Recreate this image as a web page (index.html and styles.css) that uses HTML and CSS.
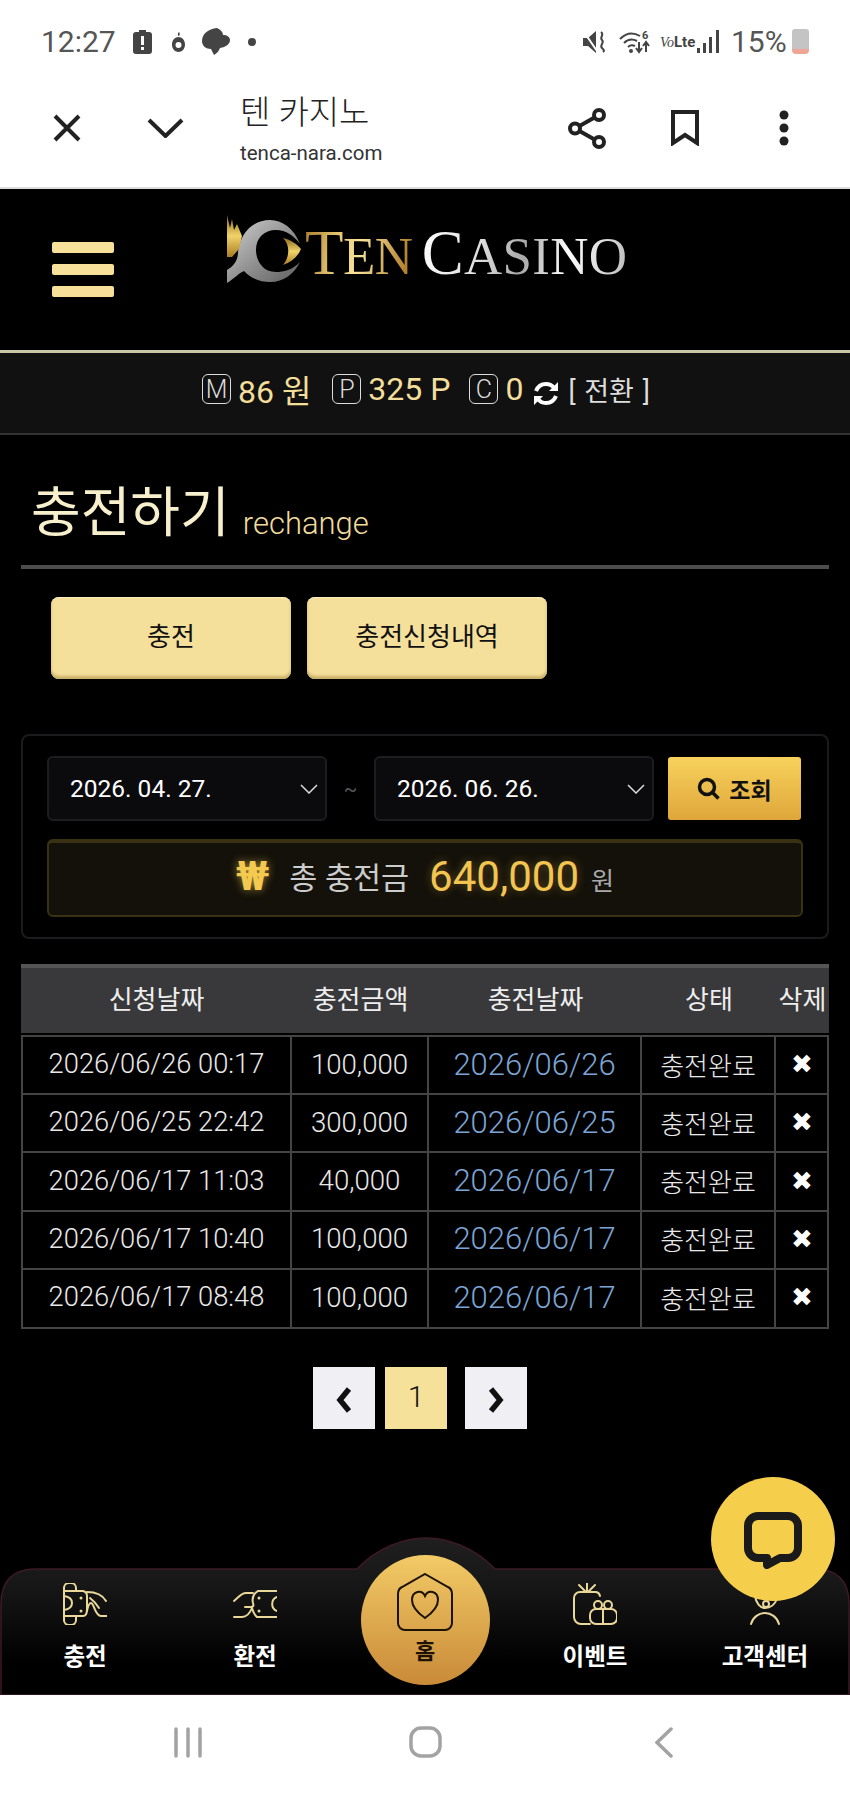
FILE: index.html
```html
<!DOCTYPE html>
<html lang="ko">
<head>
    <meta charset="UTF-8">
    <meta name="viewport" content="width=device-width, initial-scale=1.0">
    <title>텐 카지노</title>
    <link rel="stylesheet" href="styles.css">
</head>
<body>
    <div class="status-bar">
        <span class="clock">12:27</span>
        <svg class="st-alert" width="19" height="24" viewBox="0 0 19 24"><path d="M6 0h7v2h3a3 3 0 0 1 3 3v16a3 3 0 0 1-3 3H3a3 3 0 0 1-3-3V5a3 3 0 0 1 3-3h3z" fill="#444"/><rect x="8" y="6" width="3" height="9" fill="#fff"/><rect x="8" y="17" width="3" height="3" fill="#fff"/></svg>
        <svg class="st-fruit" width="13" height="20" viewBox="0 0 13 20"><path d="M7 0c1 1 1 3 0 4-1 0-2-2 0-4z" fill="#444"/><path d="M6.500 5C3 5 0 8 0 12.500S3 20 6.500 20 13 17 13 12.500 10 5 6.500 5zm0 5a3 3 0 1 1 0 6 3 3 0 0 1 0-6z" fill="#444"/></svg>
        <svg class="st-leaf" width="28" height="27" viewBox="0 0 28 27"><path d="M15 0C6 1 0 6 0 13c0 5 4 8 9 8l3 6c3-2 5-4 6-7 6-1 10-4 10-8 0-3-3-5-7-5 0-3-2-5-6-7z" fill="#444"/></svg>
        <span class="st-dot"></span>

        <svg class="st-mute" width="24" height="22" viewBox="0 0 24 22"><path d="M0 7h5l8-7v22l-8-7H0z" fill="#444"/><path d="M1 1l13 19" stroke="#fff" stroke-width="2"/><path d="M18 1c4 3-2 5 1 8s-3 5 0 8 2 3 1 4" fill="none" stroke="#444" stroke-width="2"/></svg>
        <svg class="st-wifi" width="31" height="24" viewBox="0 0 31 24"><g fill="none" stroke="#444" stroke-width="2"><path d="M1 9c6-6 13-7 20-3"/><path d="M5 13c4-4 9-4 13-2"/><path d="M9 17c2-2 5-2 7-1"/></g><circle cx="12" cy="21" r="2" fill="#444"/><text class="st-six" x="23" y="9">6</text><path d="M20 12v9m-3-3l3 4 3-4M27 22v-9m-3 3l3-4 3 4" fill="none" stroke="#444" stroke-width="2"/></svg>
        <span class="st-volte"><i>Vo</i><b>Lte</b></span>
        <svg class="st-signal" width="22" height="23" viewBox="0 0 22 23"><rect x="0" y="18" width="3" height="5" fill="#444"/><rect x="6" y="13" width="3" height="10" fill="#444"/><rect x="12" y="7" width="3" height="16" fill="#444"/><rect x="19" y="0" width="3" height="23" fill="#444"/></svg>
        <span class="st-pct">15%</span>
        <span class="st-batt"></span>
    </div>

    <div class="toolbar">
        <svg class="tb-close" width="28" height="28" viewBox="0 0 28 28"><path d="M2 2l24 24M26 2L2 26" stroke="#222" stroke-width="4" fill="none"/></svg>
        <svg class="tb-down" width="37" height="20" viewBox="0 0 37 20"><path d="M2 2l16.500 16L35 2" stroke="#222" stroke-width="4" fill="none"/></svg>
        <div class="tb-title">
            <div class="tb-name">텐 카지노</div>
            <div class="tb-url">tenca-nara.com</div>
        </div>
        <svg class="tb-share" width="38" height="41" viewBox="0 0 38 41"><g fill="none" stroke="#222" stroke-width="4"><circle cx="7" cy="20.500" r="5"/><circle cx="31" cy="7" r="5"/><circle cx="31" cy="34" r="5"/><path d="M11.500 18L26.500 9.500M11.500 23l15 8.500"/></g></svg>
        <svg class="tb-mark" width="28" height="36" viewBox="0 0 28 36"><path d="M2 2h24v31l-12-8-12 8z" fill="none" stroke="#222" stroke-width="4"/></svg>
        <svg class="tb-more" width="10" height="36" viewBox="0 0 10 36"><circle cx="5" cy="5" r="4.500" fill="#222"/><circle cx="5" cy="18" r="4.500" fill="#222"/><circle cx="5" cy="31" r="4.500" fill="#222"/></svg>
    </div>

    <header class="site-header">
        <div class="burger"><span></span><span></span><span></span></div>
        <div class="logo">
            <svg class="logo-mark" width="78" height="70" viewBox="0 0 78 70">
                <defs>
                    <linearGradient id="lgGold" x1="0" y1="0" x2="0" y2="1"><stop offset="0" stop-color="#8a6a1e"/><stop offset=".5" stop-color="#f1d36a"/><stop offset="1" stop-color="#a97c22"/></linearGradient>
                    <linearGradient id="lgSilver" x1="0" y1="0" x2="1" y2="1"><stop offset="0" stop-color="#d2d2d2"/><stop offset=".55" stop-color="#8e8e8e"/><stop offset="1" stop-color="#5e5e5e"/></linearGradient>
                </defs>
                <path d="M74 30C68 14 56 6 44 6 26 6 14 20 12 38 12 46 8 52 1 56v13c8-5 12-10 17-12 6 7 16 11 26 11 14 0 24-8 30-20-8 8-16 10-24 10-14 0-20-12-20-22 0-12 8-20 20-20 10 0 18 6 24 14z" fill="url(#lgSilver)"/>
                <path d="M1 28V1l3 13 2-9 2 11 3-6 5 12-3 13-7 8H1z" fill="url(#lgGold)"/>
                <path d="M57 24c8 2 14 6 18 11-3 7-9 13-18 16 6-7 8-19 0-27z" fill="url(#lgGold)"/>
            </svg>
            <span class="logo-text">
                <span class="logo-ten"><span class="big">T</span>EN</span>
                <span class="logo-casino"><span class="big">C</span>ASINO</span>
            </span>
        </div>
    </header>

    <div class="balance">
        <span class="tag">M</span><span class="val">86 원</span>
        <span class="tag tag-p">P</span><span class="val">325 P</span>
        <span class="tag tag-c">C</span><span class="val">0</span>
        <svg class="refresh" width="26" height="25" viewBox="0 0 26 25"><g fill="none" stroke="#fff" stroke-width="4"><path d="M3 10C5 5 9 3 13 3c3 0 6 1 8 4"/><path d="M23 15c-2 5-6 7-10 7-3 0-6-1-8-4"/></g><path d="M25 1v9h-9zM1 24v-9h9z" fill="#fff"/></svg>
        <span class="swap">[ 전환 ]</span>
    </div>

    <main class="content">
        <div class="page-title">
            <h1>충전하기</h1>
            <span>rechange</span>
        </div>

        <div class="tabs">
            <a class="tab">충전</a>
            <a class="tab">충전신청내역</a>
        </div>

        <div class="filter">
            <div class="filter-row">
                <div class="date-box">
                    <span>2026. 04. 27.</span>
                    <svg width="18" height="10" viewBox="0 0 18 10"><path d="M1 1l8 8 8-8" fill="none" stroke="#ddd" stroke-width="1.500"/></svg>
                </div>
                <span class="tilde">~</span>
                <div class="date-box">
                    <span>2026. 06. 26.</span>
                    <svg width="18" height="10" viewBox="0 0 18 10"><path d="M1 1l8 8 8-8" fill="none" stroke="#ddd" stroke-width="1.500"/></svg>
                </div>
                <button class="search-btn">
                    <svg width="23" height="23" viewBox="0 0 23 23"><circle cx="10" cy="10" r="7.500" fill="none" stroke="#111" stroke-width="3.500"/><path d="M15 15l6.500 6.500" stroke="#111" stroke-width="3.500"/></svg>
                    조회
                </button>
            </div>
            <div class="total">
                <span class="won-sign">₩</span>
                <span class="total-label">총 충전금</span>
                <span class="total-num">640,000</span>
                <span class="total-unit">원</span>
            </div>
        </div>

        <table class="list">
            <colgroup>
                <col class="c1"><col class="c2"><col class="c3"><col class="c4"><col class="c5">
            </colgroup>
            <thead>
                <tr><th>신청날짜</th><th>충전금액</th><th>충전날짜</th><th>상태</th><th>삭제</th></tr>
            </thead>
            <tbody>
                <tr><td>2026/06/26 00:17</td><td>100,000</td><td class="blue">2026/06/26</td><td>충전완료</td><td class="del">✖</td></tr>
                <tr><td>2026/06/25 22:42</td><td>300,000</td><td class="blue">2026/06/25</td><td>충전완료</td><td class="del">✖</td></tr>
                <tr><td>2026/06/17 11:03</td><td>40,000</td><td class="blue">2026/06/17</td><td>충전완료</td><td class="del">✖</td></tr>
                <tr><td>2026/06/17 10:40</td><td>100,000</td><td class="blue">2026/06/17</td><td>충전완료</td><td class="del">✖</td></tr>
                <tr><td>2026/06/17 08:48</td><td>100,000</td><td class="blue">2026/06/17</td><td>충전완료</td><td class="del">✖</td></tr>
            </tbody>
        </table>

        <div class="pager">
            <a class="pg"><svg width="18" height="28" viewBox="0 0 18 28"><path d="M14 3L5 14l9 11" fill="none" stroke="#111" stroke-width="5.500"/></svg></a>
            <a class="pg pg-on">1</a>
            <a class="pg pg-next"><svg width="18" height="28" viewBox="0 0 18 28"><path d="M4 3l9 11-9 11" fill="none" stroke="#111" stroke-width="5.500"/></svg></a>
        </div>
    </main>

    <nav class="bottom-nav">
        <svg class="nav-shape" width="850" height="159" viewBox="0 0 850 159">
            <defs>
                <linearGradient id="navBg" x1="0" y1="0" x2="0" y2="1"><stop offset="0" stop-color="#1f1f1f"/><stop offset=".3" stop-color="#171717"/><stop offset=".8" stop-color="#000"/></linearGradient>
            </defs>
            <path d="M1 158V67Q1 32 36 32H357C378 10 405 1 426 1S474 10 495 32H814Q849 32 849 67V158Z" fill="url(#navBg)" stroke="#3d1a26" stroke-width="1.500"/>
        </svg>
        <a class="nav-item">
            <svg width="44" height="42" viewBox="0 0 44 42"><g fill="none" stroke="#e9d89a" stroke-width="2" stroke-linecap="round"><path d="M1 8V5a5 5 0 0 1 5-5h2a5 5 0 0 1 5 5v3"/><path d="M1 33v4a5 5 0 0 0 5 5h2a5 5 0 0 0 5-5v-4"/><path d="M1 5v32"/><path d="M1 8h19q4 1 4 5v13q0 7-4 7H1"/><path d="M1 13q8 1 8 7t-8 7"/><path d="M24 9c8 0 15 2 19 9"/><path d="M24 28c1-5 2-8 4-8 3 0 4 13 10 13h6"/><path d="M27 15c4 3 7 7 9 10"/></g><circle cx="18" cy="15" r="1.500" fill="#e9d89a"/><circle cx="18" cy="28" r="1.500" fill="#e9d89a"/></svg>
            <span>충전</span>
        </a>
        <a class="nav-item">
            <svg width="44" height="42" viewBox="0 0 44 42"><g fill="none" stroke="#e9d89a" stroke-width="2" stroke-linecap="round"><path d="M25 8h19M24 34h20"/><path d="M44 14a7.500 7.500 0 0 0 0 14"/><path d="M1 18c5-4 7-8 12-8h7"/><path d="M25 8c-5 3-6 8-5 12 1 3 0 4-2 4h-6"/><path d="M1 34h8c5 0 8-4 10-9 1 3 2 7 5 9"/></g><circle cx="26" cy="15" r="1.500" fill="#e9d89a"/><circle cx="26" cy="28" r="1.500" fill="#e9d89a"/></svg>
            <span>환전</span>
        </a>
        <a class="home-btn">
            <svg width="56" height="58" viewBox="0 0 56 58"><path d="M28 1L51 14q4 2 4 7v29a7 7 0 0 1-7 7H8a7 7 0 0 1-7-7V21q0-5 4-7z" fill="none" stroke="#1c1206" stroke-width="2"/><path d="M28 45C18 38 15 33 15 27c0-9 10-11 13-4 3-7 13-5 13 4 0 6-3 11-13 18z" fill="none" stroke="#1c1206" stroke-width="2"/></svg>
            <span>홈</span>
        </a>
        <a class="nav-item">
            <svg width="44" height="42" viewBox="0 0 44 42"><g fill="none" stroke="#e9d89a" stroke-width="2" stroke-linecap="round"><path d="M17 41H8a7 7 0 0 1-7-7V15a6 6 0 0 1 6-6h16a5 5 0 0 1 4 4"/><path d="M13 9L6 2M14 9V0M15 9l7-7"/><rect x="17" y="26" width="27" height="15" rx="6"/><path d="M30 26v15"/><circle cx="25" cy="22" r="4"/><circle cx="35" cy="22" r="4"/></g></svg>
            <span>이벤트</span>
        </a>
        <a class="nav-item">
            <svg width="44" height="42" viewBox="0 0 44 42"><g fill="none" stroke="#e9d89a" stroke-width="2" stroke-linecap="round"><path d="M8 41c2-7 8-11 14-11s12 4 14 11"/><path d="M12 13c1 7 5 12 10 12 6 0 10-4 12-9"/><circle cx="23" cy="21" r="3"/></g></svg>
            <span>고객센터</span>
        </a>
    </nav>

    <div class="sys-nav">
        <svg class="sys-menu" width="28" height="31" viewBox="0 0 28 31"><g stroke="#a3a3a3" stroke-width="3.500" stroke-linecap="round"><path d="M2 2v27M14 2v27M26 2v27"/></g></svg>
        <svg class="sys-home" width="33" height="32" viewBox="0 0 33 32"><rect x="2" y="2" width="29" height="28" rx="10" fill="none" stroke="#a3a3a3" stroke-width="3.500"/></svg>
        <svg class="sys-back" width="18" height="31" viewBox="0 0 18 31"><path d="M16 2L2 15.500 16 29" fill="none" stroke="#a3a3a3" stroke-width="3.500" stroke-linecap="round"/></svg>
    </div>

    <a class="chat-fab">
        <svg width="58" height="57" viewBox="0 0 58 57"><path d="M14 4h30a10 10 0 0 1 10 10v22a10 10 0 0 1-10 10H36l-13 7V46h-9A10 10 0 0 1 4 36V14A10 10 0 0 1 14 4z" fill="none" stroke="#1a1a1a" stroke-width="8" stroke-linejoin="round"/></svg>
    </a>
</body>
</html>
```

FILE: styles.css
```css
* {
    box-sizing: border-box;
}

html, body {
    margin: 0;
    padding: 0;
}

body {
    position: relative;
    width: 850px;
    height: 1794px;
    overflow: hidden;
    display: flex;
    flex-direction: column;
    background: #000;
    font-family: Roboto, "Noto Sans CJK KR", sans-serif;
}

a {
    color: inherit;
    text-decoration: none;
}

/* phone status bar */
.status-bar {
    height: 72px;
    flex: none;
    display: flex;
    align-items: center;
    padding: 11px 0 0 41px;
    background: #fff;
    color: #555;
}

.clock {
    font-size: 30px;
    width: 92px;
}

.st-fruit {
    margin-left: 20px;
}

.st-leaf {
    margin-left: 17px;
}

.st-dot {
    width: 8px;
    height: 8px;
    margin-left: 18px;
    border-radius: 50%;
    background: #444;
}

.st-mute {
    margin-left: 327px;
}

.st-wifi {
    margin-left: 12px;
}

.st-six {
    font-size: 11px;
    font-weight: 700;
    fill: #444;
}

.st-volte {
    margin-left: 10px;
    width: 37px;
    font-size: 15px;
    white-space: nowrap;
    color: #444;
}

.st-volte i {
    font-family: "Liberation Serif", serif;
    font-size: 14px;
}

.st-pct {
    margin-left: 12px;
    font-size: 30px;
}

.st-batt {
    width: 17px;
    height: 25px;
    margin-left: 5px;
    border-radius: 3px 3px 4px 4px;
    background: linear-gradient(#c4c4c4 82%, #efa594 82%);
}

/* browser toolbar */
.toolbar {
    height: 117px;
    flex: none;
    display: flex;
    align-items: center;
    padding-left: 53px;
    background: #fff;
    border-bottom: 2px solid #ddd;
}

.tb-close {
    margin-top: -3px;
}

.tb-down {
    margin: -3px 0 0 66px;
}

.tb-title {
    width: 328px;
    margin: 2px 0 0 56px;
}

.tb-name {
    font-size: 33px;
    line-height: 44px;
    color: #222;
    font-weight: 300;
}

.tb-url {
    font-size: 20.500px;
    line-height: 36px;
    color: #333;
}

.tb-share {
    margin-top: -3px;
}

.tb-mark {
    margin: -3px 0 0 65px;
}

.tb-more {
    margin: -3px 0 0 80px;
}

/* site header */
.site-header {
    height: 161px;
    flex: none;
    display: flex;
    align-items: flex-start;
    padding-left: 52px;
    background: #000;
}

.burger {
    width: 62px;
    margin-top: 53px;
    display: flex;
    flex-direction: column;
    gap: 11px;
}

.burger span {
    height: 11px;
    border-radius: 2px;
    background: #f6e09a;
}

.logo {
    display: flex;
    margin: 25px 0 0 112px;
}

.logo-text {
    margin: 4px 0 0 1px;
    display: flex;
    gap: 9px;
    height: 70px;
    font-family: "Liberation Serif", serif;
    font-size: 53px;
    line-height: 70px;
    white-space: nowrap;
}

.logo-text .big {
    font-size: 63px;
}

.logo-ten, .logo-casino {
    background-clip: text;
    -webkit-background-clip: text;
    color: transparent;
}

.logo-ten {
    letter-spacing: -.5px;
    background-image: linear-gradient(100deg, #a77a2c, #e6c572 30%, #f7e39a 50%, #b58330 90%);
}

.logo-casino {
    letter-spacing: .3px;
    background-image: linear-gradient(100deg, #fff, #ddd 30%, #a8a8a8 50%, #fff 70%, #bbb);
}

/* balance strip */
.balance {
    height: 85px;
    flex: none;
    display: flex;
    align-items: center;
    padding: 0 0 8px 202px;
    background: #111;
    border-top: 3px solid #c8c6a6;
    border-bottom: 2px solid #333;
    color: #f3de9a;
    font-size: 32px;
}

.tag {
    width: 29px;
    height: 30px;
    margin-right: 7px;
    display: flex;
    align-items: center;
    justify-content: center;
    border: 1px solid #ddd;
    border-radius: 6px;
    color: #ddd;
    font-size: 25px;
    font-weight: 300;
}

.tag-p {
    margin-left: 21px;
}

.tag-c {
    margin-left: 19px;
}

.refresh {
    margin: 8px 0 0 10px;
}

.swap {
    margin-left: 9px;
    color: #ddd;
    font-size: 27px;
    word-spacing: 2px;
}

/* page body */
.content {
    flex: 1;
    min-height: 0;
    padding: 0 21px;
}

.page-title {
    height: 134px;
    padding: 0 0 16px 10px;
    display: flex;
    align-items: flex-end;
    gap: 13px;
    border-bottom: 4px solid #4d4d4d;
}

.page-title h1 {
    margin: 0;
    font-size: 54px;
    line-height: 70px;
    font-weight: 400;
    color: #f8f0cc;
}

.page-title span {
    font-size: 31px;
    line-height: 50px;
    font-weight: 300;
    color: #f0dd9c;
}

.tabs {
    display: flex;
    gap: 16px;
    padding: 28px 0 0 30px;
}

.tab {
    width: 240px;
    height: 82px;
    padding-bottom: 7px;
    display: flex;
    align-items: center;
    justify-content: center;
    border-radius: 8px;
    background: #f5e09b;
    box-shadow: inset 0 -3px 3px #c9b06a, inset 0 1px 1px #fbeebb;
    color: #111;
    font-size: 26px;
}

.filter {
    height: 205px;
    margin-top: 55px;
    padding: 20px 24px;
    border: 2px solid #1b1b1d;
    border-radius: 8px;
}

.filter-row {
    display: flex;
    align-items: center;
}

.date-box {
    width: 280px;
    height: 65px;
    padding: 0 7px 0 21px;
    display: flex;
    align-items: center;
    justify-content: space-between;
    background: #0b0b0d;
    border: 2px solid #1d1d1f;
    border-radius: 6px;
    color: #fff;
    font-size: 24.500px;
}

.tilde {
    width: 47px;
    text-align: center;
    color: #555;
    font-size: 20px;
}

.search-btn {
    width: 133px;
    height: 63px;
    margin-left: 14px;
    display: flex;
    align-items: center;
    justify-content: center;
    gap: 9px;
    border: 0;
    border-radius: 3px;
    background: linear-gradient(#f7d25c, #dfa63a);
    color: #111;
    font-family: inherit;
    font-size: 23px;
    font-weight: 700;
}

.total {
    height: 78px;
    margin-top: 18px;
    padding-bottom: 6px;
    display: flex;
    align-items: center;
    justify-content: center;
    background: #14110a;
    border: 2px solid #3a3012;
    border-top-width: 4px;
    border-radius: 6px;
}

.won-sign {
    color: #f3c94f;
    font-size: 41px;
    font-weight: 700;
    text-shadow: 0 0 8px rgba(243, 201, 79, .6);
}

.total-label {
    margin-left: 20px;
    color: #ccc;
    font-size: 30.500px;
}

.total-num {
    margin-left: 20px;
    color: #f3c550;
    font-size: 42px;
    text-shadow: 0 0 10px rgba(243, 197, 80, .35);
}

.total-unit {
    margin: 6px 0 0 12px;
    color: #aaa;
    font-size: 25px;
}

/* history table */
.list {
    width: 808px;
    margin-top: 25px;
    table-layout: fixed;
    border-collapse: separate;
    border-spacing: 0;
}

.c1 { width: 271px; }
.c2 { width: 137px; }
.c3 { width: 213px; }
.c4 { width: 134px; }
.c5 { width: 53px; }

.list th {
    height: 71px;
    padding: 0 0 6px;
    background: #39393b;
    border-top: 4px solid #555;
    border-bottom: 2px solid #000;
    color: #eee;
    font-size: 26px;
    font-weight: 400;
    white-space: nowrap;
}

.list td {
    height: 58.400px;
    padding: 0 0 2px;
    text-align: center;
    border-right: 2px solid #444;
    border-bottom: 2px solid #444;
    color: #e8e8e8;
    font-size: 26px;
    font-weight: 300;
    white-space: nowrap;
}

.list td:first-child {
    border-left: 2px solid #444;
    font-size: 27.300px;
}

.list td:nth-child(2) {
    font-size: 27.600px;
}

.list tbody tr:first-child td {
    height: 60px;
    border-top: 2px solid #444;
}

.list td.blue {
    color: #7ba4d4;
    font-size: 31px;
}

.list td.del {
    color: #fff;
    font-family: "DejaVu Sans", sans-serif;
    font-size: 26px;
}

.pager {
    margin-top: 38px;
    padding-left: 292px;
    display: flex;
    gap: 10px;
}

.pg {
    width: 62px;
    height: 62px;
    display: flex;
    align-items: center;
    justify-content: center;
    background: #f0eff4;
    color: #111;
    font-size: 30px;
    font-weight: 300;
}

.pg svg {
    margin-top: 4px;
}

.pg-on {
    padding-bottom: 3px;
    background: #f5e199;
}

.pg-next {
    margin-left: 8px;
}

/* bottom navigation */
.bottom-nav {
    position: relative;
    height: 126px;
    flex: none;
    display: grid;
    grid-template-columns: repeat(5, 170px);
    color: #fff;
}

.nav-shape {
    position: absolute;
    left: 0;
    top: -32px;
}

.nav-item {
    position: relative;
    padding-top: 14px;
    display: flex;
    flex-direction: column;
    align-items: center;
    gap: 17px;
}

.nav-item span {
    font-size: 23.500px;
    line-height: 30px;
    font-weight: 700;
    white-space: nowrap;
}

.home-btn {
    position: relative;
    justify-self: center;
    width: 129px;
    height: 130px;
    margin-top: -14px;
    padding-top: 18px;
    display: flex;
    flex-direction: column;
    align-items: center;
    border-radius: 50%;
    background: linear-gradient(#f2ca66, #c98a38);
    color: #1c1206;
}

.home-btn span {
    margin-top: 6px;
    font-size: 22px;
    line-height: 30px;
    font-weight: 700;
}

/* phone nav keys */
.sys-nav {
    height: 99px;
    flex: none;
    position: relative;
    display: flex;
    align-items: center;
    padding: 0 0 5px 174px;
    background: #fff;
}

.sys-home {
    margin-left: 207px;
}

.sys-back {
    margin-left: 213px;
}

.chat-fab {
    position: absolute;
    right: 15px;
    bottom: 193px;
    width: 124px;
    height: 124px;
    display: flex;
    align-items: center;
    justify-content: center;
    padding-top: 3px;
    border-radius: 50%;
    background: #f5cf4c;
}
```
